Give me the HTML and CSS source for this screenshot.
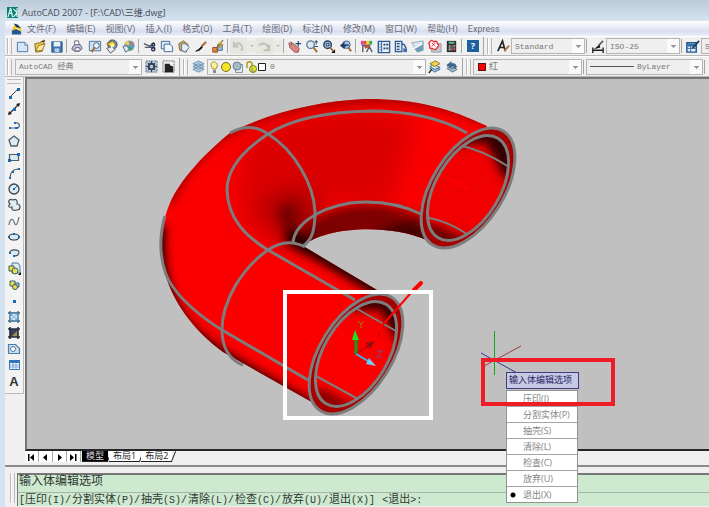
FILE: index.html
```html
<!DOCTYPE html>
<html lang="zh-CN">
<head>
<meta charset="utf-8">
<title>AutoCAD 2007 - [F:\CAD\三维.dwg]</title>
<link rel="stylesheet" href="styles.css">
</head>
<body>
<div class="app">
  <header class="titlebar">
    <svg class="logo" viewBox="0 0 12 12"><rect width="12" height="12" fill="#0d7c74"/><path d="M1 11L4 1L6 11M2 7h4M7 2l4 4-4 5M11 1v10" fill="none" stroke="#d8fbf4" stroke-width="1.3"/></svg>
    <h1>AutoCAD 2007 - [F:\CAD\三维.dwg]</h1>
  </header>

  <nav class="menubar">
    <svg class="docicon" viewBox="0 0 12 12"><path d="M1 7L4 1l7 4v6H1z" fill="#f0c419"/><path d="M3 0l4 1 4 4-5-1z" fill="#1d3454"/><path d="M1 8l5-2 5 3v3H1z" fill="#23598f"/><path d="M5 5l4 2" stroke="#fff"/></svg>
    <button>文件(F)</button><button>编辑(E)</button><button>视图(V)</button><button>插入(I)</button><button>格式(O)</button><button>工具(T)</button><button>绘图(D)</button><button>标注(N)</button><button>修改(M)</button><button>窗口(W)</button><button>帮助(H)</button><button>Express</button>
  </nav>

  <div class="bar">
    <i class="grip"></i>
    <button class="tool" aria-label="新建"><svg viewBox="0 0 16 16"><path d="M2.500 3.500h8l3 3v7h-11z" fill="#d5e7f6" stroke="#4a78a8"/><path d="M10.500 3.500v3h3" fill="#fff" stroke="#4a78a8"/></svg></button>
    <button class="tool" aria-label="打开"><svg viewBox="0 0 16 16"><path d="M3 5l5-1 5-3-2 12-7 1z" fill="#e9c44c" stroke="#8c6b1d"/><path d="M4 13l3-6 7-2-3 7z" fill="#fbe9a0" stroke="#9a7a25"/><path d="M10 3l4-1" stroke="#333"/></svg></button>
    <button class="tool" aria-label="保存"><svg viewBox="0 0 16 16"><path d="M3 3h11v11H3z" fill="#3e76b0" stroke="#27548a"/><path d="M5 3h7v5H5z" fill="#e8f1fa"/><path d="M6 10h5v4H6z" fill="#b9cfe6"/></svg></button>
    <i class="sep"></i>
    <button class="tool" aria-label="打印"><svg viewBox="0 0 16 16"><path d="M5 2h4l1 5H5z" fill="#fff" stroke="#667"/><path d="M3 8l3-2h5l2 4-3 3H5l-3-2z" fill="#c3c6d4" stroke="#5d6180"/><ellipse cx="8" cy="11" rx="3" ry="2" fill="#e6e8f0" stroke="#555a77"/></svg></button>
    <button class="tool" aria-label="打印预览"><svg viewBox="0 0 16 16"><path d="M2.500 2.500h12v10h-12z" fill="#cfe2f3" stroke="#4674a4"/><circle cx="10" cy="7" r="3" fill="#f5fbff" stroke="#3a567a"/><path d="M8 9l-3 5" stroke="#a5672b" stroke-width="2"/></svg></button>
    <button class="tool" aria-label="发布"><svg viewBox="0 0 16 16"><circle cx="9" cy="6" r="5" fill="#7799b9" stroke="#334e70"/><path d="M3 5l6-3 4 4-5 3z" fill="#f1ce43" stroke="#786011"/><path d="M3 10l5-2 4 3-5 4z" fill="#e9ecef" stroke="#555"/><circle cx="9" cy="7" r="2" fill="#fff6af"/></svg></button>
    <button class="tool" aria-label="三维DWF"><svg viewBox="0 0 16 16"><circle cx="9" cy="7" r="5.500" fill="#58a0c6"/><path d="M9 7L8 1l-5 4z" fill="#f2cb4c"/><path d="M9 7l5-2-2-3z" fill="#e66b4f"/><path d="M9 7l4 4-5 2z" fill="#45a176"/><path d="M2 8l4-1 3 4-4 3z" fill="#dfe7ed" stroke="#506b82"/></svg></button>
    <i class="sep"></i>
    <button class="tool" aria-label="剪切"><svg viewBox="0 0 16 16"><path d="M2 5l9 4M3 9h11M8 8l5-4" stroke="#555d70" stroke-width="1.400"/><circle cx="12" cy="11" r="1.700" fill="none" stroke="#1d2c4d" stroke-width="1.500"/><circle cx="12" cy="6" r="1.500" fill="none" stroke="#1d2c4d" stroke-width="1.500"/></svg></button>
    <button class="tool" aria-label="复制"><svg viewBox="0 0 16 16"><path d="M2.500 2.500h9v8h-9z" fill="#dbeaf7" stroke="#3f6894"/><path d="M5.500 5.500h6l3 3v5h-9z" fill="#eef6fc" stroke="#3f6894"/></svg></button>
    <button class="tool" aria-label="粘贴"><svg viewBox="0 0 16 16"><path d="M3 5l5-3 5 4-2 8-7-2z" fill="#d5ad55" stroke="#836225"/><path d="M6 5l4 0 4 4-4 5-4-2z" fill="#e4eefa" stroke="#53779c"/></svg></button>
    <button class="tool" aria-label="特性匹配"><svg viewBox="0 0 16 16"><path d="M14 3L9 8" stroke="#a5612a" stroke-width="2"/><path d="M9 8L6 11l-3 2 4-1 3-3z" fill="#222" stroke="#222"/></svg></button>
    <button class="tool" aria-label="块编辑器"><svg viewBox="0 0 16 16"><path d="M3 9h5v5H3z" fill="#f48d39" stroke="#9b3c17"/><path d="M8 7h5v5H8z" fill="#9ec9ed" stroke="#33618f"/><path d="M14 1l-6 5h3l-5 6 8-6h-3z" fill="#f9d92e" stroke="#7f5513" stroke-width=".7"/></svg></button>
    <i class="sep"></i>
    <button class="tool off" aria-label="放弃"><svg viewBox="0 0 16 16"><path d="M3 3v5h5" fill="none" stroke="#bfc0b8" stroke-width="2"/><path d="M4 7c4-5 10-1 7 6" fill="none" stroke="#bfc0b8" stroke-width="2"/></svg></button>
    <button class="tiny off" aria-label="放弃列表"></button>
    <button class="tool off" aria-label="重做"><svg viewBox="0 0 16 16"><path d="M13 6v6H7" fill="none" stroke="#bfc0b8" stroke-width="2"/><path d="M12 11c0-6-6-8-10-4" fill="none" stroke="#bfc0b8" stroke-width="2"/></svg></button>
    <button class="tiny off" aria-label="重做列表"></button>
    <i class="sep"></i>
    <button class="tool" aria-label="实时平移"><svg viewBox="0 0 16 16"><path d="M2 4l3 2-1-3 4 3 5 4-1 4H8L3 9z" fill="#d98680" stroke="#94534f"/><path d="M12 2v6M9 5h6" stroke="#27466d" stroke-width="1.300"/></svg></button>
    <button class="tool" aria-label="实时缩放"><svg viewBox="0 0 16 16"><circle cx="7" cy="6" r="4" fill="#dcebf6" stroke="#527193" stroke-width="1.300"/><path d="M10 9l4 5" stroke="#a66a33" stroke-width="2"/><path d="M13 1v5M11 3h4M11 8h4" stroke="#2d4b72"/></svg></button>
    <button class="tool" aria-label="窗口缩放"><svg viewBox="0 0 16 16"><circle cx="7" cy="6" r="4" fill="#bfd6ea" stroke="#24476e" stroke-width="1.600"/><path d="M5.500 4.500h3v3h-3z" fill="none" stroke="#234"/><path d="M10 9l3 4" stroke="#a66a33" stroke-width="2"/><path d="M15 11v4h-4z" fill="#111"/></svg></button>
    <button class="tool" aria-label="缩放上一个"><svg viewBox="0 0 16 16"><circle cx="9" cy="6" r="4" fill="#adc8df" stroke="#365e87"/><path d="M11 9l3 4" stroke="#a45f25" stroke-width="2"/><path d="M2 7l5-4v3c3-1 5 0 5 1-3 0-4 1-5 2v2z" fill="#203f68"/></svg></button>
    <i class="sep"></i>
    <button class="tool" aria-label="特性"><svg viewBox="0 0 16 16"><path d="M2 2h3v4H2z" fill="#e536b3"/><path d="M5 2h3v4H5z" fill="#ec4729"/><path d="M8 2h3v4H8z" fill="#efd927"/><path d="M11 2h3v4h-3z" fill="#31a953"/><path d="M3 7h9M4 7v7M8 14l3-6 3 6" fill="none" stroke="#5b6175" stroke-width="1.500"/><path d="M6 9l5-2" stroke="#ba5147" stroke-width="3"/></svg></button>
    <button class="tool" aria-label="设计中心"><svg viewBox="0 0 16 16"><path d="M2.500 2.500h12v12h-12z" fill="#e3effa" stroke="#2a5c93" stroke-width="1.500"/><path d="M6 3v11" stroke="#2a5c93"/><path d="M8 5h2v2H8zM11 5h2v2h-2zM8 9h2v2H8zM11 9h2v2h-2zM4 5h1v1H4zM4 8h1v1H4zM4 11h1v1H4z" fill="#245"/></svg></button>
    <button class="tool" aria-label="工具选项板"><svg viewBox="0 0 16 16"><path d="M2.500 2.500h7v11h-7z" fill="#d9eaf7" stroke="#2b5990" stroke-width="1.300"/><path d="M4 5h3M4 8h3M4 11h3" stroke="#29466e" stroke-width="1.400"/><path d="M9 5l3 1 2 4" fill="none" stroke="#31588b" stroke-width="1.500"/><path d="M11 10h4v4h-4z" fill="#3f71a6"/></svg></button>
    <button class="tool" aria-label="图纸集管理器"><svg viewBox="0 0 16 16"><path d="M2 4l12-2v10l-6 2z" fill="#dbe6ed" stroke="#91a7b5"/><path d="M3 9l11-5v8l-6 2z" fill="#6e9cb5"/><path d="M2 11l11-6" stroke="#f5f7f8" stroke-width="2"/></svg></button>
    <button class="tool" aria-label="标记集管理器"><svg viewBox="0 0 16 16"><path d="M5 5h10v9H5z" fill="#c3c9cf" stroke="#939da9"/><path d="M3 3q2-3 4 0 4-2 4 2 3 2 0 4-2 4-5 1-4 1-3-3-2-3 0-4z" fill="#fff" stroke="#eb303b" stroke-width="1.500"/><path d="M5 4l4 4M9 4L5 8" stroke="#ef3b45"/></svg></button>
    <button class="tool" aria-label="快速计算器"><svg viewBox="0 0 16 16"><path d="M3 2h10v12H3z" fill="#302f31"/><path d="M5 3h6v2H5z" fill="#64c38b"/><path d="M5 7h2v1H5zM8 7h1v1H8zM10 7h2v1h-2zM5 9h2v1H5zM8 9h1v1H8zM5 11h2v1H5zM8 11h1v1H8z" fill="#eee"/><path d="M10 9h2v3h-2z" fill="#e84d4d"/></svg></button>
    <i class="sep"></i>
    <button class="tool help" aria-label="帮助">?</button>
    <i class="end"></i><i class="grip"></i>
    <button class="tool" aria-label="文字样式"><svg viewBox="0 0 16 16"><path d="M3 13L8 2l3 11M5 9h5" fill="none" stroke="#222" stroke-width="1.700"/><path d="M15 7l-5 6" stroke="#b77840" stroke-width="2"/></svg></button>
    <label class="combo style"><select aria-label="文字样式"><option>Standard</option></select></label>
    <i class="sep"></i>
    <button class="tool" aria-label="标注样式"><svg viewBox="0 0 16 16"><path d="M3 9v6M14 9v6M3 12h11" stroke="#222" stroke-width="1.500"/><path d="M14 2L9 7" stroke="#5d6467" stroke-width="2"/><path d="M10 6l-6 5 7-2z" fill="#111"/></svg></button>
    <label class="combo style"><select aria-label="标注样式"><option>ISO-25</option></select></label>
    <i class="sep"></i>
    <button class="tool" aria-label="表格样式"><svg viewBox="0 0 16 16"><path d="M2 4h10v10H2z" fill="#e2eef9" stroke="#22528b" stroke-width="1.500"/><path d="M2 5h10v3H2z" fill="#2e6fae"/><path d="M2 10h10M6 7v7" stroke="#386aa3"/><path d="M15 2l-7 8" stroke="#243e63" stroke-width="2"/></svg></button>
    <label class="combo style"><select aria-label="表格样式"><option>Standard</option></select></label>
  </div>

  <div class="bar second">
    <i class="grip"></i>
    <label class="combo space"><select aria-label="工作空间"><option>AutoCAD 经典</option></select></label>
    <button class="tool" aria-label="工作空间设置"><svg viewBox="0 0 16 16"><path d="M2 2h12v12H2z" fill="#b9c6d2" stroke="#657b90" stroke-dasharray="2 1"/><circle cx="8" cy="8" r="3" fill="none" stroke="#2b4056" stroke-width="2"/><path d="M8 2v3M8 11v3M2 8h3M11 8h3M4 4l2 2M10 10l2 2M12 4l-2 2M6 10l-2 2" stroke="#2b4056"/></svg></button>
    <button class="tool" aria-label="我的工作空间"><svg viewBox="0 0 16 16"><path d="M2 2h12v12H2z" fill="#eee" stroke="#666" stroke-dasharray="2 1"/><path d="M4 5h5l1 2 3 1v6H4z" fill="#222"/></svg></button>
    <i class="end"></i><i class="grip"></i>
    <button class="tool" aria-label="图层特性管理器"><svg viewBox="0 0 16 16"><path d="M2 11l6-3 6 3-6 3zM2 8l6-3 6 3-6 3zM2 5l6-3 6 3-6 3z" fill="#b6cfe1" stroke="#577e9e" stroke-width=".8"/></svg></button>
    <label class="combo layer">
      <svg viewBox="0 0 58 14"><path d="M4 9c-4-5-1-7 1-7s5 2 2 7z" fill="#fff19b" stroke="#a48f2e"/><path d="M4 10h3v3H4z" fill="#8d8d99"/><circle cx="17" cy="7" r="4.500" fill="#f5e725" stroke="#6f6e3a"/><path d="M26.500 4.500h7v8h-7z" fill="#e2ebf3" stroke="#8098ac"/><circle cx="28" cy="6" r="4" fill="#a5bac5" stroke="#6b8497"/><path d="M38 8V4c0-3 5-3 5 0v3" fill="none" stroke="#a9a31b" stroke-width="1.500"/><circle cx="44" cy="9" r="3.500" fill="#eaea2d" stroke="#7f7e17"/><path d="M43 7v4h3" stroke="#888" fill="none"/><path d="M49.500 3.500h7v7h-7z" fill="#fff" stroke="#222"/></svg>
      <select aria-label="图层"><option>0</option></select></label>
    <button class="tool" aria-label="将对象的图层置为当前"><svg viewBox="0 0 16 16"><path d="M3 10l5-2 6 3-6 3z" fill="#a1c2d9" stroke="#426f91"/><path d="M3 8l5-2 6 3-6 2z" fill="#dde7ec" stroke="#426f91"/><path d="M3 5l6-3 5 3-6 3z" fill="#efd54f" stroke="#887b20"/><path d="M2 15l3-4" stroke="#222" stroke-width="1.500"/></svg></button>
    <button class="tool" aria-label="上一个图层"><svg viewBox="0 0 16 16"><path d="M3 10l5-2 6 3-5 3zM3 7l6-2 5 3-6 3z" fill="#a7bfd1" stroke="#58758d"/><path d="M3 6l5-4v3c5-2 6 3 4 6-1-3-2-4-4-3v2z" fill="#40658d"/></svg></button>
    <i class="end"></i><i class="grip"></i>
    <label class="combo color"><i class="swatch"></i><select aria-label="颜色"><option>红</option></select></label>
    <i class="sep"></i>
    <label class="combo linetype"><i class="sample"></i><select aria-label="线型"><option>ByLayer</option></select></label>
    <i class="sep"></i>
  </div>

  <main class="work">
    <aside class="draw">
      <i class="hgrip"></i>
      <button aria-label="直线"><svg viewBox="0 0 16 16"><path d="M4 12L12 4" stroke="#444"/><path d="M3 11h3v3H3zM11 3h3v3h-3z" fill="#1769b5"/></svg></button>
      <button aria-label="构造线"><svg viewBox="0 0 16 16"><path d="M3 13L13 3" stroke="#333" stroke-width="1.300"/><path d="M3 10l3 3-4 1zM10 3l4-1-1 4z" fill="#222"/><path d="M7 7h3v3H7z" fill="#1769b5"/></svg></button>
      <button aria-label="多段线"><svg viewBox="0 0 16 16"><path d="M4 11h7c4-1 3-6-2-5" fill="none" stroke="#57616b" stroke-width="1.200"/><path d="M3 10h2v2H3zM9 10h3v2H9zM8 5h2v2H8z" fill="#1769b5"/></svg></button>
      <button aria-label="正多边形"><svg viewBox="0 0 16 16"><path d="M8 3l5 4-2 6H5L3 7z" fill="#dceaf2" stroke="#4d5c66" stroke-width="1.300"/></svg></button>
      <button aria-label="矩形"><svg viewBox="0 0 16 16"><path d="M3.500 5.500h9v6h-9z" fill="#dceaf2" stroke="#4d5c66" stroke-width="1.200"/><path d="M2 10h3v3H2zM11 4h3v3h-3z" fill="#1769b5"/></svg></button>
      <button aria-label="圆弧"><svg viewBox="0 0 16 16"><path d="M4 13c0-5 3-9 9-9" fill="none" stroke="#47525c" stroke-width="1.200"/><path d="M3 12h2v2H3zM6 6h2v2H6zM12 3h2v2h-2z" fill="#1769b5"/></svg></button>
      <button aria-label="圆"><svg viewBox="0 0 16 16"><circle cx="8" cy="8" r="5" fill="#dceaf2" stroke="#38454f" stroke-width="1.300"/><path d="M8 8l3-3" stroke="#1769b5"/><path d="M7 7h2v2H7z" fill="#1769b5"/></svg></button>
      <button aria-label="修订云线"><svg viewBox="0 0 16 16"><path d="M4 7C1 4 4 1 7 3c3-2 5 1 4 4 4 0 4 6 0 6-3 1-6 0-5-3-4 1-4-1-2-3z" fill="#e4edf3" stroke="#48545e" stroke-width="1.200"/></svg></button>
      <button aria-label="样条曲线"><svg viewBox="0 0 16 16"><path d="M3 12c1-7 4-7 5-3 2 6 4 1 5-5" fill="none" stroke="#6b747b" stroke-width="1.200"/></svg></button>
      <button aria-label="椭圆"><svg viewBox="0 0 16 16"><ellipse cx="8" cy="8" rx="5" ry="3" fill="#dceaf2" stroke="#37434d" stroke-width="1.200"/><path d="M2 7h2v2H2zM7 4h2v2H7zM12 7h2v2h-2z" fill="#1769b5"/></svg></button>
      <button aria-label="椭圆弧"><svg viewBox="0 0 16 16"><path d="M4 8c-1-4 9-4 9-1 0 3-2 4-5 4" fill="#dceaf2" stroke="#47525c" stroke-width="1.200"/><path d="M3 7h2v2H3zM7 10h2v2H7z" fill="#1769b5"/></svg></button>
      <button aria-label="插入块"><svg viewBox="0 0 16 16"><path d="M6 2h6l2 3v7H6z" fill="#dceaf5" stroke="#4779a1"/><path d="M3 5h5v5H3z" fill="#f0dc48" stroke="#385c55"/><circle cx="9" cy="10" r="3" fill="#eadd56" stroke="#385c55"/><path d="M15 11v3h-3z" fill="#111"/></svg></button>
      <button aria-label="创建块"><svg viewBox="0 0 16 16"><path d="M4 4h5v5H4z" fill="#f0dc48" stroke="#356386"/><path d="M9 6h4v4H9z" fill="#9ac8e0" stroke="#356386"/><circle cx="9" cy="10" r="2.500" fill="#eadd56" stroke="#385c55"/></svg></button>
      <button aria-label="点"><svg viewBox="0 0 16 16"><path d="M7 7h3v3H7z" fill="#1769b5"/></svg></button>
      <button aria-label="图案填充"><svg viewBox="0 0 16 16"><path d="M4 4h8v8H4z" fill="#cfe8f7"/><path d="M4 2v12M12 2v12M2 4h12M2 12h12" stroke="#33678c" stroke-width="1.300"/><path d="M4 12l8-8M4 8l4-4M8 12l4-4M4 4l8 8" stroke="#76a8cd" stroke-width=".8"/></svg></button>
      <button aria-label="渐变色"><svg viewBox="0 0 16 16"><path d="M4 4h8v8H4z" fill="#394057"/><path d="M6 11l6-6v7H6z" fill="#9d954e"/><path d="M4 2v12M12 2v12M2 4h12M2 12h12" stroke="#262c40" stroke-width="1.600"/></svg></button>
      <button aria-label="面域"><svg viewBox="0 0 16 16"><path d="M2.500 3.500h7l4 4v5h-11z" fill="#cbdfef" stroke="#4c7da5" stroke-width="1.200"/><circle cx="7" cy="8" r="2.500" fill="#fff" stroke="#4c7da5"/></svg></button>
      <button aria-label="表格"><svg viewBox="0 0 16 16"><path d="M3.500 3.500h10v9h-10z" fill="#fff" stroke="#3473bb"/><path d="M3 3h11v3H3z" fill="#3473bb"/><path d="M4 8h9M4 10h9M7 6v6M10 6v6" stroke="#7ca8d5"/></svg></button>
      <button class="letter" aria-label="多行文字">A</button>
    </aside>

    <section class="drawing">
      <div class="canvas">
        <svg class="model" width="683" height="372" viewBox="27 79 683 372">
          <defs>
            <clipPath id="body"><path d="M487 126C450 109 420 99 365 99C320 101 270 112 230 133C205 153 180 180 170 203C160 226 158 255 165 273C173 302 193 330 223 352L317 405L377 290L303 246C322 228 385 222 427 240Z"/></clipPath>
            <clipPath id="bore1"><ellipse cx="356" cy="354" rx="58" ry="32" transform="rotate(-59 356 354)"/></clipPath>
            <clipPath id="bore2"><ellipse cx="468" cy="188" rx="58" ry="32" transform="rotate(-59 468 188)"/></clipPath>
            <filter id="soft" x="-50%" y="-50%" width="200%" height="200%"><feGaussianBlur stdDeviation="5"/></filter>
            <filter id="haze" x="-50%" y="-50%" width="200%" height="200%"><feGaussianBlur stdDeviation="12"/></filter>
          </defs>
          <g clip-path="url(#body)">
            <path d="M150 90h350v330H150z" fill="#fc0000"/>
            <path d="M240 150C290 95 400 105 415 125L390 205L330 200L300 250L240 225Z" fill="#900" opacity=".34" filter="url(#haze)"/>
            <path d="M495 124C450 104 420 97 365 97C310 99 270 108 225 133C200 150 180 176 168 203" fill="none" stroke="#500" stroke-width="9" opacity=".6" filter="url(#soft)"/>
            <path d="M255 190C270 215 283 195 300 190L314 212L304 246L288 240Z" fill="#500" opacity=".6" filter="url(#haze)"/>
            <path d="M280 210L290 202L300 246L285 236Z" fill="#400" opacity=".5" filter="url(#soft)"/>
            <path d="M300 235C330 196 390 200 430 220L430 250L300 250Z" fill="#500" opacity=".75" filter="url(#soft)"/>
            <path d="M380 236L410 228L432 246" fill="none" stroke="#200" stroke-width="10" filter="url(#soft)" opacity=".8"/>
            <path d="M288 235L388 294" stroke="#200" stroke-width="15" filter="url(#soft)"/>
            <path d="M159 225C156 260 160 295 184 325C202 348 230 362 325 416" fill="none" stroke="#200" stroke-width="14" filter="url(#soft)"/>
          </g>
          <g fill="none" stroke="#7d7d7d" stroke-width="3">
            <path d="M467 133C443 119 410 111 369 111C325 112 290 120 268 134C242 151 227 169 227 190C228 220 247 237 268 250L355 300"/>
            <path d="M230 133C242 126 256 125 268 134C294 150 314 184 315 212C315 230 312 240 303 246"/>
            <path d="M293 243C294 226 315 209 350 203C378 200 400 204 421 214"/>
            <path d="M305 247C294 241 281 241 268 250C242 268 222 301 222 330C222 348 230 360 243 365"/>
            <path d="M165 216C157 243 161 271 173 287C185 304 203 318 222 330L308 380"/>
          </g>
          <g transform="rotate(-58 468 188)"><ellipse cx="468" cy="188" rx="67" ry="36" fill="#a60000" stroke="#7d7d7d" stroke-width="3"/></g>
          <ellipse cx="468" cy="188" rx="58" ry="32" transform="rotate(-59 468 188)" fill="#f00000"/>
          <g clip-path="url(#bore2)"><path d="M455 136L492 130L515 175" fill="none" stroke="#300" stroke-width="22" filter="url(#soft)"/><path d="M425 230L470 250" stroke="#600" stroke-width="18" filter="url(#soft)"/><path d="M458 145Q483 150 509 167M424 217Q447 220 470 236" fill="none" stroke="#7d7d7d" stroke-width="2"/></g>
          <path d="M440 175L468 188" stroke="#f00" stroke-width="3" stroke-linecap="round"/>
          <ellipse cx="468" cy="188" rx="58" ry="32" transform="rotate(-59 468 188)" fill="none" stroke="#7d7d7d" stroke-width="3"/>
          <g transform="rotate(-58 356 354)"><ellipse cx="356" cy="354" rx="67" ry="36" fill="#a60000" stroke="#7d7d7d" stroke-width="3"/></g>
          <ellipse cx="356" cy="354" rx="58" ry="32" transform="rotate(-59 356 354)" fill="#fa0000"/>
          <g clip-path="url(#bore1)"><path d="M350 300L387 300L407 340" fill="none" stroke="#300" stroke-width="20" filter="url(#soft)"/><path d="M315 392L355 414" stroke="#700" stroke-width="12" filter="url(#soft)"/><path d="M352 306L396 331M316 376L358 399" stroke="#7d7d7d" stroke-width="2"/></g>
          <ellipse cx="356" cy="354" rx="58" ry="32" transform="rotate(-59 356 354)" fill="none" stroke="#7d7d7d" stroke-width="3"/>
          <path d="M361 347L388 319L416 287" fill="none" stroke="#f00" stroke-width="2"/><path d="M414 290l7-7" stroke="#f00" stroke-width="4" stroke-linecap="round"/>
          <path d="M356 354l12-8" stroke="#910c0c"/><path d="M366 343l9-2-5 8z" fill="#8b1010"/>
          <path d="M356 354v-15" stroke="#179b1c" stroke-width="3"/><path d="M352 340l3-10 4 10z" fill="#13e71a"/>
          <path d="M356 354l12 7" stroke="#32b9ef" stroke-width="2"/><path d="M369 358l7 8-10-2z" fill="#70cdf8"/>
          <path d="M358 321l3 3v4M361 324l3-3" fill="none" stroke="#848b18"/><path d="M377 351h5l-5 6h5" fill="none" stroke="#655696"/>
          <path d="M377 331l4 6M381 331l-4 6" stroke="#d60000"/>
          <path d="M494.500 331v44" stroke="#16a51d"/><path d="M484 366L521 346" stroke="#a33b3b"/><path d="M481 353L517 373" stroke="#3333a2"/>
          <path d="M285 292h146v126H285z" fill="none" stroke="#fff" stroke-width="4"/>
        </svg>
        <div class="prompt">
          <h2>输入体编辑选项</h2>
          <div class="options" role="menu">
            <button role="menuitem">压印(I)</button><button role="menuitem">分割实体(P)</button><button role="menuitem">抽壳(S)</button><button role="menuitem">清除(L)</button><button role="menuitem">检查(C)</button><button role="menuitem">放弃(U)</button><button role="menuitem" class="current">退出(X)</button>
          </div>
        </div>
        <div class="highlight"></div>
      </div>
      <div class="tabs">
        <button class="step" aria-label="第一个"><svg viewBox="0 0 12 10"><path d="M3 2h1.500v7H3zM9 2v7L5 5.500z"/></svg></button>
        <button class="step" aria-label="上一个"><svg viewBox="0 0 12 10"><path d="M8 2v7L4 5.500z"/></svg></button>
        <button class="step" aria-label="下一个"><svg viewBox="0 0 12 10"><path d="M5 2v7l4-3.500z"/></svg></button>
        <button class="step" aria-label="最后一个"><svg viewBox="0 0 12 10"><path d="M3 2v7l4-3.500zM8 2h1.500v7H8z"/></svg></button>
        <button class="tab active">模型</button><button class="tab">布局1</button><button class="tab">布局2</button>
      </div>
    </section>
  </main>

  <footer class="command">
    <i class="grip tall"></i>
    <div class="console">
      <p>输入体编辑选项</p>
      <p class="line"><span><kbd>[</kbd>压印<kbd>(I)/</kbd></span><span>分割实体<kbd>(P)/</kbd></span><span>抽壳<kbd>(S)/</kbd></span><span>清除<kbd>(L)/</kbd></span><span>检查<kbd>(C)/</kbd></span><span>放弃<kbd>(U)/</kbd></span><span>退出<kbd>(X)]</kbd></span><span><kbd>&nbsp;&lt;</kbd>退出<kbd>&gt;:</kbd></span></p>
    </div>
  </footer>
</div>
</body>
</html>
```
FILE: styles.css
```css
* { box-sizing: border-box; }
body {
  margin: 0;
  font-family: "Open Sans", "Noto Sans CJK SC", sans-serif;
  font-size: 9px;
  color: #6a6e78;
  background: #f0f0f0;
}
button, select { font: inherit; color: inherit; border: 0; padding: 0; margin: 0; background: none; }
h1, h2, p { margin: 0; font-weight: 400; }
kbd { font: 10px "Liberation Mono", monospace; }

.app {
  height: 100vh;
  display: flex;
  flex-direction: column;
  padding-left: 5px;
  overflow: hidden;
  background: linear-gradient(90deg, #d5e3f1 5px, #f0f0f0 5px);
}

.titlebar {
  flex: none;
  height: 21px;
  display: flex;
  align-items: center;
  gap: 4px;
  margin-left: -5px;
  padding: 4px 0 0 7px;
  background: linear-gradient(#bccbd9, #d6e3f0);
}
.titlebar h1 { font-size: 9px; line-height: 14px; color: #454b55; }
.logo { width: 11px; height: 11px; }

.menubar {
  flex: none;
  height: 15px;
  display: flex;
  align-items: center;
  gap: 10px;
  padding-left: 6px;
  font-family: Roboto, "Noto Sans CJK SC", sans-serif;
  background: linear-gradient(#fff, #d9def0 70%, #eef0f8);
}
.menubar button { line-height: 14px; white-space: nowrap; }
.docicon { width: 11px; height: 12px; margin-right: -5px; }

.bar {
  flex: none;
  height: 20px;
  display: flex;
  align-items: center;
  overflow: hidden;
  border-top: 1px solid #fff;
  border-bottom: 1px solid #b8b8b8;
  background: #f0f0f0;
}
.second { height: 21px; }
.bar > * { flex: none; }
.grip { width: 5px; height: 16px; margin: 0 2px; border: solid #b9b9b9; border-width: 0 1px; background: linear-gradient(90deg, #fff 1px, #f0f0f0 1px); }
.sep { width: 1px; height: 14px; margin: 0 2px 0 1px; background: #a5a5a5; }
.end { width: 1px; height: 18px; margin: 0 1px 0 2px; background: #a5a5a5; }
.tool { width: 17px; height: 16px; display: grid; place-items: center; }
.tool svg { width: 15px; height: 15px; }
.off { background: #e7e7e0; }
.tiny { width: 9px; height: 12px; background: #eaeae4; display: grid; place-items: center; }
.tiny::after { content: ""; border: solid transparent; border-width: 2px 2px 0; border-top-color: #bbb; }
.help { width: 12px; height: 12px; margin: 0 2px 0 3px; color: #fff; background: #1e5f9d; font-weight: 700; line-height: 12px; }

.combo {
  height: 16px;
  display: flex;
  align-items: center;
  position: relative;
  border: 1px solid #b5b5b5;
  background: #efefef;
  font: 8px "Liberation Mono", "Noto Sans CJK SC", monospace;
  color: #777;
}
.combo select { flex: 1; min-width: 0; height: 14px; padding-left: 3px; appearance: none; outline: 0; }
.combo::after {
  content: "";
  width: 12px;
  height: 14px;
  background: linear-gradient(#999, #999) 4px 6px / 5px 1px no-repeat, linear-gradient(#999, #999) 5px 7px / 3px 1px no-repeat, linear-gradient(#999, #999) 6px 8px / 1px 1px no-repeat, #fafafa;
}
.style { width: 74px; }
.space { width: 127px; margin: 0 1px; }
.layer { width: 219px; }
.layer svg { width: 58px; height: 14px; margin-left: 1px; }
.color { width: 109px; font-size: 9px; }
.swatch { width: 8px; height: 8px; margin-left: 4px; border: 1px solid #5a1111; background: #f00; }
.linetype { width: 117px; }
.sample { width: 44px; height: 1px; margin-left: 3px; background: #555; }

.work { flex: 1; min-height: 0; display: flex; }
.draw { flex: none; align-self: flex-start; width: 19px; display: flex; flex-direction: column; align-items: center; padding: 2px 0 4px; border: solid #bbb; border-width: 0 1px 1px 0; background: #f3f3f3; }
.draw button { width: 16px; height: 16px; }
.draw svg { display: block; width: 16px; height: 16px; }
.hgrip { width: 14px; height: 5px; margin-bottom: 1px; border: solid #bbb; border-width: 1px 0; }
.draw .letter { font: 700 13px "Liberation Sans", sans-serif; line-height: 18px; color: #333; }

.drawing { flex: 1; min-width: 0; margin-left: 1px; display: flex; flex-direction: column; }
.canvas { flex: 1; min-height: 0; position: relative; border: solid #757575; border-width: 2px 0 2px 2px; border-bottom-color: #262626; background: #c0c0c0; }
.model { position: absolute; left: 0; top: 0; }
.prompt { position: absolute; z-index: 1; left: 479px; top: 293px; width: 73px; }
.prompt h2 { height: 17px; border: 1px solid #3e3e84; background: #c7c8e2; color: #25256b; font-size: 9px; line-height: 14px; padding-left: 2px; white-space: nowrap; }
.options { display: flex; flex-direction: column; margin: 1px 1px 0 0; border: 1px solid #939393; background: #fff; }
.options button { height: 16px; padding-left: 16px; text-align: left; line-height: 15px; color: #858585; border-bottom: 1px solid #a5a5a5; white-space: nowrap; }
.options button:last-child { height: 15px; border: 0; }
.options .current { background: radial-gradient(circle at 6px 8px, #000 2px, transparent 3px); }
.highlight { position: absolute; z-index: 2; left: 454px; top: 279px; width: 134px; height: 48px; border: 4px solid #ee1c25; }

.tabs { flex: none; height: 11px; display: flex; background: #f0f0f0; color: #222; }
.step { width: 14px; height: 11px; border-right: 1px solid #aaa; background: #fff; }
.step svg { display: block; width: 12px; height: 10px; }
.tab { position: relative; padding: 0 4px; margin-left: 1px; line-height: 10px; background: #fff; border: solid #222; border-width: 0 0 1px; }
.tab::after { content: ""; position: absolute; right: -2px; top: 0; width: 1px; height: 11px; background: #222; rotate: 22deg; }
.tab.active { background: #000; color: #ddd; }

.command { flex: none; height: 42px; display: flex; margin-top: 3px; padding: 6px 0 1px 3px; border-top: 2px solid #8b8b8b; }
.tall { height: 30px; }
.console { flex: 1; border: solid #777; border-width: 2px 0 0 1px; background: #cde9d0; color: #303830; font: 11px "Liberation Mono", "Noto Sans CJK SC", monospace; }
.console p { height: 17px; line-height: 14px; padding-left: 1px; white-space: nowrap; }
.console p:first-child { font-size: 12px; }
.console .line { display: flex; gap: 1px; height: 15px; border-top: 1px solid #a5b5a7; }
```
